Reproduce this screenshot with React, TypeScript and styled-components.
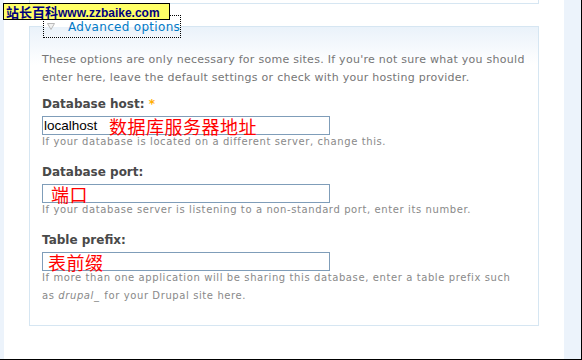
import styled, { createGlobalStyle } from 'styled-components'

const GlobalStyle = createGlobalStyle`
  html, body {
    margin: 0;
    padding: 0;
    background: #fff;
  }
  body {
    font-family: 'DejaVu Sans', Verdana, sans-serif;
  }
`

const Frame = styled.div`
  position: relative;
  display: flex;
  width: 582px;
  height: 360px;
  box-sizing: border-box;
  border-right: 1px solid #000;
  border-bottom: 1px solid #000;
  overflow: hidden;
`

const SideStrip = styled.div<{ $w: number }>`
  flex: 0 0 ${p => p.$w}px;
  background: #ecf3fb;
`

const Main = styled.main`
  flex: 1;
  min-width: 0;
  padding: 0 25px;
  background: #fff;
`

const PrevFieldset = styled.div`
  height: 3px;
  border: 1px solid #d6e6f2;
  border-top: 0;
`

const Fieldset = styled.fieldset`
  min-width: 0;
  margin: 11px 0 0;
  padding: 0 12px 20px;
  border: 1px solid #d6e6f2;
  background: linear-gradient(#eaf2fa, #fff 38px);
`

const Legend = styled.legend`
  margin-left: 1px;
  padding: 0;
`

const Toggle = styled.a`
  display: flex;
  align-items: center;
  box-sizing: border-box;
  height: 23px;
  padding-left: 3px;
  border: 1px dotted #000;
  color: #027ac6;
  font-size: 12px;
  letter-spacing: 0.3px;
  text-decoration: none;
  cursor: pointer;
`

const Arrow = styled.svg`
  flex: none;
  margin-right: 13px;
`

const Intro = styled.p`
  margin: 13px -4px 9px 0;
  font-size: 11px;
  line-height: 17.5px;
  letter-spacing: 0.27px;
  color: #767676;
`

const FormItem = styled.div`
  margin-bottom: 12px;
  &:last-child {
    margin-bottom: 0;
  }
`

const Label = styled.label`
  display: block;
  font-size: 12px;
  font-weight: bold;
  line-height: 18px;
  color: #494949;
`

const Required = styled.span`
  color: #ffae00;
`

const Field = styled.div`
  position: relative;
  width: 288px;
  margin-top: 3px;
`

const TextInput = styled.input`
  display: block;
  box-sizing: border-box;
  width: 100%;
  height: 19px;
  margin: 0;
  padding: 0 1px;
  border: 1px solid #7f9db9;
  background: #fff;
  color: #000;
  font: 13.5px 'Liberation Sans', Arial, sans-serif;
  outline: none;
`

// red hand-written notes laid over the inputs
const Note = styled.span<{ $left: number }>`
  position: absolute;
  top: 50%;
  left: ${p => p.$left}px;
  transform: translateY(-50%);
  color: #f00;
  font: 18px 'Noto Sans CJK SC', sans-serif;
  letter-spacing: 0.5px;
  line-height: 15px;
  pointer-events: none;
`

const Help = styled.div`
  margin-top: -2px;
  padding-right: 10px;
  font-size: 10px;
  line-height: 18px;
  letter-spacing: 0.6px;
  color: #898989;
  em {
    padding-right: 1px;
  }
`

const Watermark = styled.div`
  position: absolute;
  top: 3px;
  left: 3px;
  box-sizing: border-box;
  width: 167px;
  height: 17px;
  padding-left: 2px;
  border: 1px solid #000;
  background: #ffff66;
  color: #00007f;
  font: bold 12px/15px 'Liberation Sans', Arial, sans-serif;
  white-space: nowrap;
`

const WatermarkCjk = styled.span`
  font: bold 13px/15px 'Noto Sans CJK SC', sans-serif;
`

const fields = [
  {
    id: 'db_host',
    label: 'Database host:',
    required: true,
    value: 'localhost',
    note: '数据库服务器地址',
    noteLeft: 67,
    help: 'If your database is located on a different server, change this.',
  },
  {
    id: 'db_port',
    label: 'Database port:',
    value: '',
    note: '端口',
    noteLeft: 9,
    help: 'If your database server is listening to a non-standard port, enter its number.',
  },
  {
    id: 'db_prefix',
    label: 'Table prefix:',
    value: '',
    note: '表前缀',
    noteLeft: 6,
    help: (
      <>
        {'If more than one application will be sharing this database, enter a table prefix such '}
        {'as '}
        <em>drupal_</em>
        {' for your Drupal site here.'}
      </>
    ),
  },
]

export default function App() {
  return (
    <Frame>
      <GlobalStyle />
      <SideStrip $w={4} />
      <Main>
        <PrevFieldset />
        <Fieldset>
          <Legend>
            <Toggle>
              <Arrow width='8' height='7' viewBox='0 0 8 7'>
                <polygon points='0.5,0.5 7.5,0.5 4,6.5' fill='#f2f2f2' stroke='#b9b9b9' />
              </Arrow>
              Advanced options
            </Toggle>
          </Legend>
          <Intro>
            These options are only necessary for some sites. If you're not sure what you should
            enter here, leave the default settings or check with your hosting provider.
          </Intro>
          {fields.map(f => (
            <FormItem key={f.id}>
              <Label htmlFor={f.id}>
                {f.label} {f.required && <Required>*</Required>}
              </Label>
              <Field>
                <TextInput id={f.id} type='text' defaultValue={f.value} />
                <Note $left={f.noteLeft}>{f.note}</Note>
              </Field>
              <Help>{f.help}</Help>
            </FormItem>
          ))}
        </Fieldset>
      </Main>
      <SideStrip $w={17} />
      <Watermark>
        <WatermarkCjk>站长百科</WatermarkCjk>www.zzbaike.com
      </Watermark>
    </Frame>
  )
}
